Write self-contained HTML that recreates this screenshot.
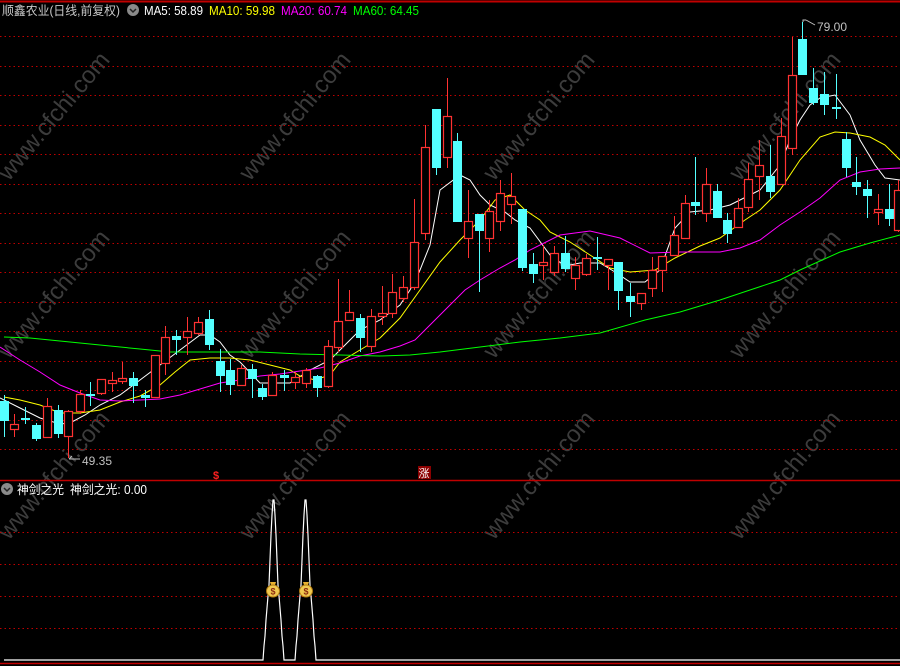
<!DOCTYPE html>
<html><head><meta charset="utf-8">
<style>
html,body{margin:0;padding:0;background:#000;width:900px;height:666px;overflow:hidden}
svg{display:block}
text{font-family:"Liberation Sans","Noto Sans CJK SC",sans-serif}
</style></head>
<body>
<svg id="s" width="900" height="666" viewBox="0 0 900 666" xmlns="http://www.w3.org/2000/svg">
<rect width="900" height="666" fill="#000"/>
<g id="wm" fill="#3c3c3c" font-size="24" font-family="Liberation Sans,sans-serif"></g>
<g id="grid"></g>
<line x1="0" y1="1.5" x2="900" y2="1.5" stroke="#c00000" stroke-width="2"/>
<line x1="0" y1="480.5" x2="900" y2="480.5" stroke="#c00000" stroke-width="1.5"/>
<line x1="0" y1="663.5" x2="900" y2="663.5" stroke="#c00000" stroke-width="1.5"/>
<g id="ma" fill="none" stroke-width="1"></g>
<g id="cd"></g>
<!-- header -->
<text x="2" y="15" font-size="12.5" fill="#c8c8c8" textLength="118" lengthAdjust="spacingAndGlyphs">顺鑫农业(日线,前复权)</text>
<circle cx="133" cy="10" r="6" fill="#8a8a8a"/>
<path d="M130 9 L133 12 L136 9" stroke="#222" stroke-width="1.5" fill="none"/>
<text x="144" y="15" font-size="12.5" fill="#fff" textLength="59" lengthAdjust="spacingAndGlyphs">MA5: 58.89</text>
<text x="209" y="15" font-size="12.5" fill="#ffff00" textLength="66" lengthAdjust="spacingAndGlyphs">MA10: 59.98</text>
<text x="281" y="15" font-size="12.5" fill="#ff00ff" textLength="66" lengthAdjust="spacingAndGlyphs">MA20: 60.74</text>
<text x="353" y="15" font-size="12.5" fill="#00ff00" textLength="66" lengthAdjust="spacingAndGlyphs">MA60: 64.45</text>
<!-- price labels -->
<path d="M803 22 L803 20 L806 20 M806 20 L815 25" stroke="#c0c0c0" fill="none"/>
<text x="817" y="31" font-size="12" fill="#c0c0c0">79.00</text>
<path d="M69 459 L80 459 M69 459 L72 456" stroke="#c0c0c0" fill="none"/>
<text x="82" y="465" font-size="12" fill="#c0c0c0">49.35</text>
<text x="213" y="479" font-size="11" fill="#ff2020" font-weight="bold">$</text>
<rect x="418" y="466" width="13" height="13" fill="#8b0000"/>
<text x="418.5" y="477" font-size="11" fill="#fff">涨</text>
<!-- lower panel -->
<circle cx="7" cy="489" r="6" fill="#8a8a8a"/>
<path d="M4 488 L7 491 L10 488" stroke="#222" stroke-width="1.5" fill="none"/>
<text x="17" y="494" font-size="12.5" fill="#fff" textLength="47" lengthAdjust="spacingAndGlyphs">神剑之光</text>
<text x="70" y="494" font-size="12.5" fill="#fff" textLength="77" lengthAdjust="spacingAndGlyphs">神剑之光: 0.00</text>
<polyline fill="none" stroke="#fff" stroke-width="1.2" points="4,660 263,660 264,646 265,636 266,620 268,596 269,585 270,560 271,535 272,515 273,500 274,500 275,515 276,535 277,560 278,585 279,596 281,620 282,636 283,646 284,660 295,660 296,646 297,636 298,620 300,596 301,585 302,560 303,535 304,515 305,500 306,500 307,515 308,535 309,560 310,585 311,596 313,620 314,636 315,646 316,660 900,660"/>
<g id="bags"></g>
</svg>
<script>
const NS="http://www.w3.org/2000/svg";
function el(p,t,a,txt){const e=document.createElementNS(NS,t);for(const k in a)e.setAttribute(k,a[k]);if(txt)e.textContent=txt;p.appendChild(e);return e;}
const wm=document.getElementById('wm');
[55,296,540,786].forEach(cx=>[117,295,476].forEach(cy=>{
 el(wm,'text',{x:cx,y:cy,'text-anchor':'middle','dominant-baseline':'middle',transform:`rotate(-50 ${cx} ${cy})`},'www.cfchi.com');
}));
const g=document.getElementById('grid');
for(let i=0;i<15;i++){const y=Math.round(36+i*29.5)+0.5;el(g,'line',{x1:0,x2:900,y1:y,y2:y,stroke:'#c00000','stroke-dasharray':'1.5 3'});}
[532.5,564.5,596.5,628.5].forEach(y=>el(g,'line',{x1:0,x2:900,y1:y,y2:y,stroke:'#c00000','stroke-dasharray':'1.5 3'}));
const ma=document.getElementById('ma');
const L={
'#ffffff':"0,398 20,408 40,418 60,424 70,423 85,415 100,405 120,395 140,380 160,365 180,350 200,335 210,335 220,342 230,355 240,362 260,383 290,383 310,370 330,360 340,350 360,330 380,320 400,305 410,290 420,270 430,245 440,190 460,175 470,180 480,195 490,205 505,212 515,220 530,228 550,255 565,266 580,263 600,263 615,272 630,282 645,282 660,270 675,228 690,212 710,210 730,205 750,195 760,190 780,165 790,140 800,120 810,105 820,98 835,95 850,115 860,140 875,165 885,178 900,180",
'#ffff00':"4,397 20,400 40,405 60,413 80,413 100,410 120,402 140,396 160,385 175,372 190,360 210,358 230,358 250,360 270,365 290,370 300,376 315,380 330,375 340,362 360,350 380,338 400,318 420,290 440,262 460,240 480,220 495,200 510,195 525,210 540,220 550,232 570,242 590,255 610,268 630,272 655,270 675,258 700,246 720,238 745,220 760,210 780,190 800,160 820,137 835,132 850,133 870,137 885,145 900,160",
'#ff00ff':"0,347 20,360 40,372 60,385 80,393 100,400 120,401 140,400 160,399 180,395 200,389 220,383 240,380 260,376 280,374 300,371 320,368 340,363 360,356 380,352 400,346 415,340 430,325 450,305 465,290 480,280 500,268 515,260 530,250 560,235 590,231 620,238 650,253 680,252 720,252 740,248 760,240 780,225 800,212 820,198 840,180 860,172 880,169 900,168",
'#00ff00':"4,337 30,338 60,341 100,345 140,349 170,352 200,352 260,352 300,354 340,355 380,356 410,355 440,352 480,347 520,342 560,338 600,333 645,320 680,312 720,300 750,290 780,280 800,270 840,252 870,243 900,235"};
for(const c in L)el(ma,'polyline',{points:L[c],stroke:c});
const D=`4 c 401 421 395 437
14 r 424 429 414 437
25 c 418 420 407 424
36 c 425 439 423 441
47 r 406 437 398 437
58 c 410 434 405 438
68 r 411 436 410 458
80 r 394 411 390 414
90 c 394 396 382 406
101 r 379 393 379 395
112 r 380 383 372 392
122 r 378 381 362 384
133 c 378 386 372 403
145 c 395 398 390 407
155 r 355 397 355 397
165 r 337 363 326 375
176 c 336 340 330 355
187 r 331 337 317 355
198 r 322 333 317 335
209 c 319 345 310 350
220 c 361 376 349 392
230 c 370 385 359 395
241 r 368 385 365 385
252 c 369 379 364 398
262 c 388 397 384 400
272 r 375 395 372 395
284 c 375 378 370 391
295 r 377 382 372 389
306 r 370 383 368 388
317 c 376 388 375 397
328 r 346 386 340 388
338 r 321 347 279 352
349 r 312 320 290 320
360 c 318 338 314 352
371 r 316 346 309 352
382 r 313 316 286 325
392 r 292 313 274 318
403 r 287 298 276 302
414 r 242 287 199 290
425 r 147 233 125 240
436 c 109 168 109 175
447 r 116 157 78 168
457 c 141 222 133 222
468 r 221 238 190 258
479 c 214 231 214 292
489 r 211 238 200 252
500 r 193 221 180 231
511 r 196 204 173 224
522 c 209 268 209 271
533 c 264 274 253 283
543 r 262 265 245 280
554 r 253 272 246 276
565 c 253 269 236 272
575 r 265 278 257 290
586 r 258 274 254 276
597 c 257 259 237 270
608 r 259 265 259 290
618 c 262 291 262 310
630 c 296 302 283 317
641 r 293 303 293 310
652 r 270 288 257 297
662 r 256 270 256 292
674 r 235 255 216 255
685 r 203 238 195 238
695 c 202 206 157 215
706 r 184 213 168 222
717 c 191 218 184 218
727 c 220 234 213 243
738 r 208 227 198 227
748 r 179 207 163 212
759 r 165 176 140 200
770 c 176 192 145 198
781 r 136 184 118 184
792 r 75 148 37 155
802 c 39 75 22 75
813 c 88 103 68 105
824 c 94 105 72 115
836 c 107 109 74 119
846 c 139 168 132 177
856 c 182 187 157 195
867 c 189 196 180 218
878 r 209 212 194 225
889 c 209 219 184 226
898 r 190 230 180 232`;
const cd=document.getElementById('cd');
D.split('\n').forEach(l=>{const p=l.trim().split(/\s+/);const x=+p[0],t=p[1],a=+p[2],b=+p[3],h=+p[4],lo=+p[5];
 const col=t=='r'?'#ff3232':'#54ffff';const xc=x+0.5;
 if(h<a)el(cd,'line',{x1:xc,x2:xc,y1:h,y2:a,stroke:col});
 if(lo>b)el(cd,'line',{x1:xc,x2:xc,y1:b,y2:lo,stroke:col});
 if(t=='r')el(cd,'rect',{x:x-3.5,y:a+0.5,width:8,height:Math.max(b-a,1),fill:'#000',stroke:col,'stroke-width':1.2});
 else el(cd,'rect',{x:x-4,y:a,width:9,height:Math.max(b-a,2),fill:col});
});
const bg=document.getElementById('bags');
[273,306].forEach(x=>{
 el(bg,'path',{d:`M${x-3} 582 L${x+3} 582 L${x+2} 585 L${x-2} 585 Z`,fill:'#e8b030'});
 el(bg,'ellipse',{cx:x,cy:591,rx:6.5,ry:6,fill:'#f0c850',stroke:'#b07a10'});
 el(bg,'text',{x:x,y:594.5,'font-size':9,'text-anchor':'middle',fill:'#8b2a10','font-weight':'bold'},'$');
});
</script>
</body></html>
